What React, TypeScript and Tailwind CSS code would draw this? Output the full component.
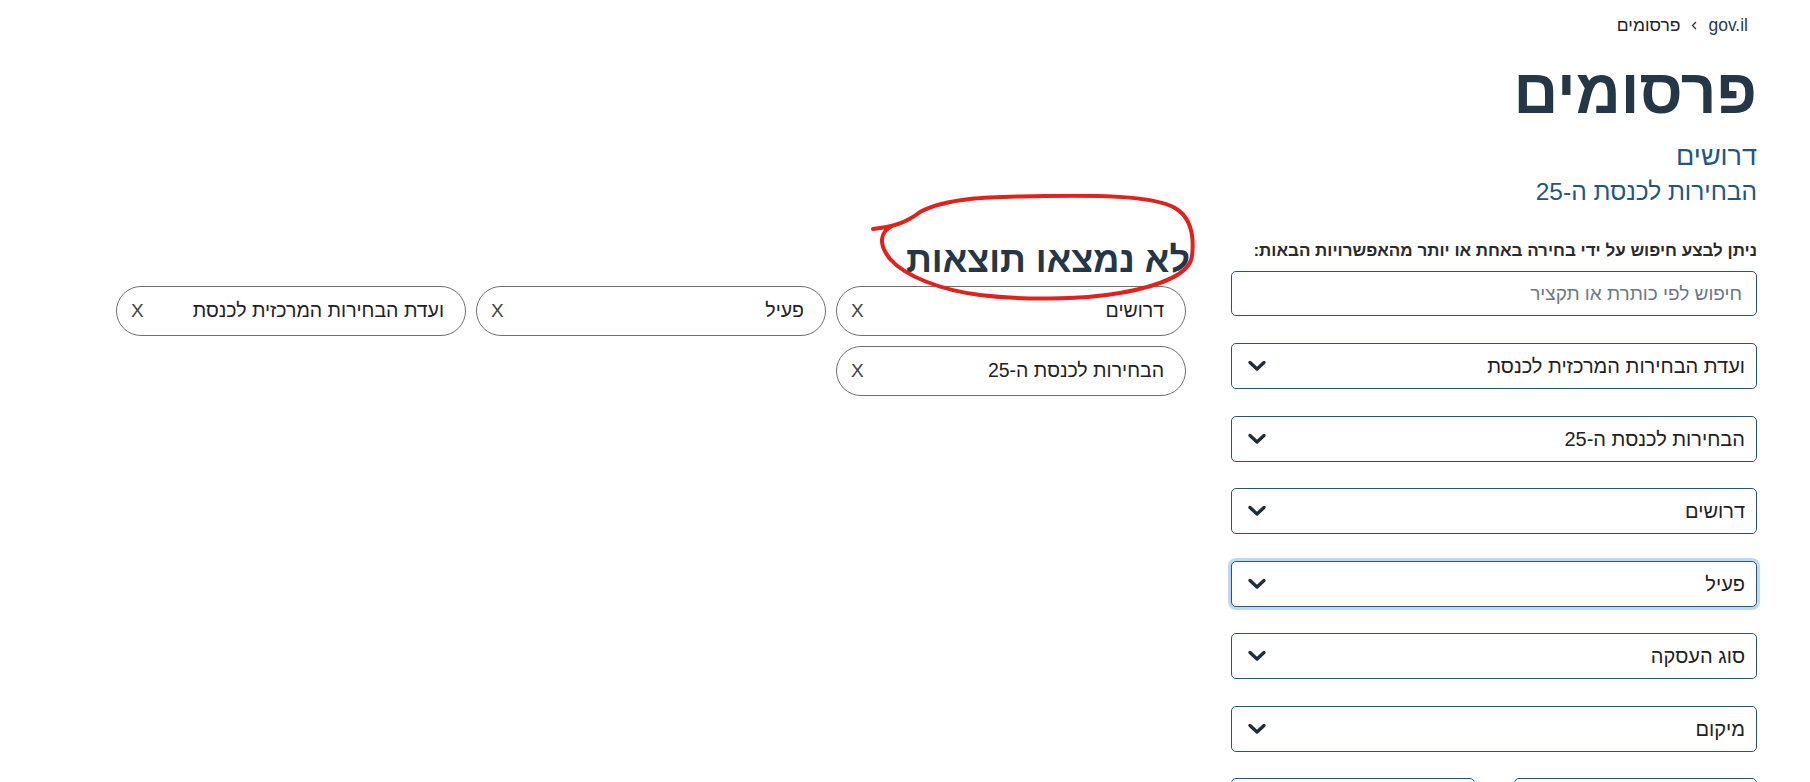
import React from 'react';

const FILTERS = [
  'ועדת הבחירות המרכזית לכנסת',
  'הבחירות לכנסת ה-25',
  'דרושים',
  'פעיל',
  'סוג העסקה',
  'מיקום',
];

const CHIPS = ['דרושים', 'פעיל', 'ועדת הבחירות המרכזית לכנסת', 'הבחירות לכנסת ה-25'];

function Chevron() {
  return (
    <svg width="20" height="12" viewBox="0 0 20 12" fill="none">
      <polyline points="3,2.5 10,9 17,2.5" stroke="#1f2e3b" strokeWidth="3.4" strokeLinecap="round" strokeLinejoin="round" />
    </svg>
  );
}

function Select({ label, focused }: { label: string; focused?: boolean }) {
  return (
    <div
      className={`h-[46px] rounded-[5px] border border-[#2b5277] bg-white flex items-center justify-between pr-[11px] pl-[15px] ${
        focused ? 'shadow-[0_0_0_3px_#bcd9f8]' : ''
      }`}
    >
      <span className="text-[20px] text-[#222]">{label}</span>
      <Chevron />
    </div>
  );
}

function Chip({ label }: { label: string }) {
  return (
    <div className="w-[350px] h-[50px] rounded-full border border-[#6f6f6f] flex items-center justify-between pr-[21px] pl-[14px]">
      <span className="text-[19.5px] text-[#222]">{label}</span>
      <span className="text-[19px] text-[#444]">X</span>
    </div>
  );
}

// סימון ידני באדום מסביב לכותרת
function RedCircle() {
  return (
    <svg className="absolute left-[870px] top-[194px] pointer-events-none" width="330" height="112" viewBox="0 0 330 112" fill="none">
      <path
        d="M 3 35 C 20 33, 35 30, 50 18 C 80 2, 130 3, 175 2 C 230 1, 285 2, 305 14 C 322 24, 324 45, 322 62 C 320 80, 290 92, 250 99 C 210 106, 150 106, 110 101 C 70 96, 35 82, 20 65 C 8 50, 10 38, 22 32"
        stroke="#e2201c"
        strokeWidth="4"
        strokeLinecap="round"
        strokeLinejoin="round"
      />
    </svg>
  );
}

export default function App() {
  return (
    <div dir="rtl" className="relative min-h-screen bg-white pr-[53px] pl-[116px] font-['Liberation_Sans',sans-serif]">
      {/* כותרת עליונה */}
      <div className="pt-[13px] pr-[9px] flex items-center gap-[11px] text-[17.5px] leading-[24px]">
        <span className="text-[#2a3b4c]">gov.il</span>
        <svg width="6" height="9" viewBox="0 0 6 9" fill="none">
          <polyline points="5,1 1.5,4.5 5,8" stroke="#333" strokeWidth="1.3" />
        </svg>
        <span className="text-[#222]">פרסומים</span>
      </div>
      <h1 className="mt-[18px] text-[62px] leading-[73px] font-bold text-[#253746]">פרסומים</h1>
      <div className="mt-[12px] text-[27px] leading-[32px] text-[#1f5685]">דרושים</div>
      <div className="mt-[4px] text-[24.5px] leading-[31px] text-[#1f5685]">הבחירות לכנסת ה-25</div>

      <div className="mt-[32px] flex gap-[41px]">
        {/* מסננים */}
        <div className="w-[526px] shrink-0">
          <div className="text-[17px] leading-[24px] font-bold text-[#2b2b2b]">
            ניתן לבצע חיפוש על ידי בחירה באחת או יותר מהאפשרויות הבאות:
          </div>
          <input
            className="mt-[8px] w-full h-[45px] rounded-[5px] border border-[#2b5277] pr-[14px] text-[19px] outline-none placeholder:text-[#6b7886]"
            placeholder="חיפוש לפי כותרת או תקציר"
          />
          <div className="mt-[27px] flex flex-col gap-[26.5px]">
            {FILTERS.map((f) => (
              <Select key={f} label={f} focused={f === 'פעיל'} />
            ))}
            <div className="grid grid-cols-2 gap-[39px]">
              <div className="h-[46px] rounded-[5px] border border-[#2b5277]" />
              <div className="h-[46px] rounded-[5px] border border-[#2b5277]" />
            </div>
          </div>
        </div>

        {/* תוצאות */}
        <div className="flex-1">
          <h2 className="text-[36px] leading-[41px] font-bold text-[#253746]">לא נמצאו תוצאות</h2>
          <div className="mt-[6px] pr-[4px] flex flex-wrap gap-[10px]">
            {CHIPS.map((c) => (
              <Chip key={c} label={c} />
            ))}
          </div>
        </div>
      </div>

      <RedCircle />
    </div>
  );
}
